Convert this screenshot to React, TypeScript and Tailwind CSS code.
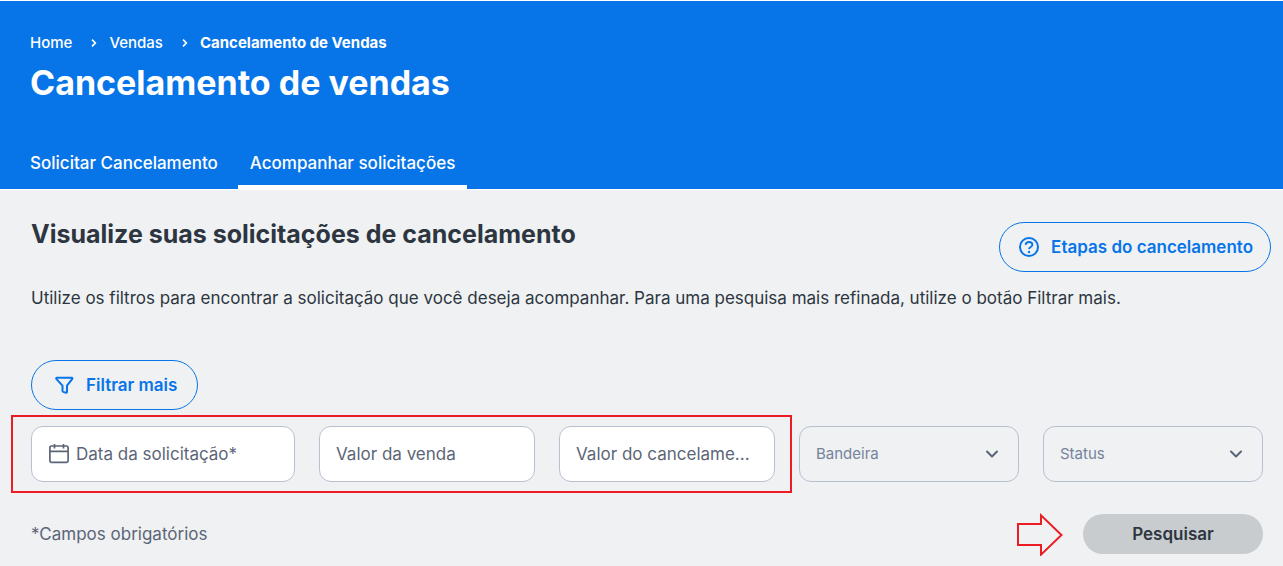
import type { ReactNode } from 'react';

const outlineButton =
  'flex h-[50px] shrink-0 items-center gap-2.5 rounded-full border border-[#0775e8] text-[17px] leading-6 font-semibold text-[#0775e8]';

const inputClass =
  'h-14 w-full min-w-0 rounded-xl border border-[#b8c0cf] bg-white px-4 text-[17px] text-[#5c6577] placeholder:text-[#5c6577] placeholder:opacity-100';

function CrumbArrow() {
  return (
    <svg
      className="mr-3 ml-[18px] h-2.5 w-[7px]"
      viewBox="0 0 7 10"
      fill="none"
      stroke="currentColor"
      strokeWidth="1.7"
      aria-hidden="true"
    >
      <path d="M2 1.7 5.3 5 2 8.3" />
    </svg>
  );
}

function SelectField({ id, label }: { id: string; label: string }) {
  return (
    <div className="relative min-w-0">
      <select
        id={id}
        aria-label={label}
        className="h-14 w-full appearance-none rounded-xl border border-[#b8c0cf] bg-transparent px-4 text-[15px] text-[#76839b]"
      >
        <option>{label}</option>
      </select>
      <svg
        className="pointer-events-none absolute top-6 right-5 h-2 w-3.5"
        viewBox="0 0 14 8"
        fill="none"
        stroke="#56637a"
        strokeWidth="2"
        strokeLinecap="round"
        strokeLinejoin="round"
        aria-hidden="true"
      >
        <path d="M2 1.5 7 6.5 12 1.5" />
      </svg>
    </div>
  );
}

function TextField({ id, label, placeholder, icon }: { id: string; label: string; placeholder: string; icon?: ReactNode }) {
  return (
    <div className="relative min-w-0">
      {icon}
      <input
        id={id}
        type="text"
        aria-label={label}
        placeholder={placeholder}
        className={icon ? `${inputClass} pl-11` : inputClass}
      />
    </div>
  );
}

export default function App() {
  return (
    <div className="min-h-screen bg-[#eff1f3] font-['Inter','Liberation_Sans',sans-serif] text-[#2d3640]">
      <header className="border-y border-white bg-[#0775e8] text-white">
        <nav aria-label="Trilha" className="flex items-center px-[30px] pt-8 text-[15px] leading-5 font-medium">
          <a href="#home">Home</a>
          <CrumbArrow />
          <a href="#vendas">Vendas</a>
          <CrumbArrow />
          <a href="#cancelamento" aria-current="page" className="font-bold">
            Cancelamento de Vendas
          </a>
        </nav>
        <h1 className="px-[30px] pt-2.5 text-[34px] leading-10 font-bold">Cancelamento de vendas</h1>
        <nav aria-label="Seções" className="mt-9 flex gap-2 px-[18px] text-[17px] leading-6 font-medium">
          <a href="#solicitar" className="h-[50px] border-b-4 border-transparent px-3 pt-3">
            Solicitar Cancelamento
          </a>
          <a href="#acompanhar" aria-current="page" className="h-[50px] border-b-4 border-white px-3 pt-3">
            Acompanhar solicitações
          </a>
        </nav>
      </header>

      <main className="pb-3 pl-[31px]">
        <div className="flex items-start justify-between pt-8 pr-3">
          <h2 className="-mt-1 text-[25px] leading-8 font-bold">Visualize suas solicitações de cancelamento</h2>
          <button type="button" className={`${outlineButton} px-[17px]`}>
            <svg className="size-6" viewBox="0 0 24 24" fill="none" stroke="currentColor" strokeWidth="2" aria-hidden="true">
              <circle cx="12" cy="12" r="9" />
              <path d="M8.6 9.9C8.8 8 10.2 7 12 7c2 0 3.4 1.1 3.4 2.8 0 2.2-3.2 2.3-3.4 4.4" strokeWidth="1.8" />
              <circle cx="12" cy="17" r="1.2" fill="currentColor" stroke="none" />
            </svg>
            Etapas do cancelamento
          </button>
        </div>

        <p className="mt-3.5 text-[17px] leading-6">
          Utilize os filtros para encontrar a solicitação que você deseja acompanhar. Para uma pesquisa mais refinada, utilize o
          botão Filtrar mais.
        </p>

        <form className="pt-[50px] pr-5">
          <button type="button" className={`${outlineButton} px-5`}>
            <svg
              className="size-6"
              viewBox="0 0 24 24"
              fill="none"
              stroke="currentColor"
              strokeWidth="2"
              strokeLinejoin="round"
              aria-hidden="true"
            >
              <path d="M4.8 4.8h15c.6 0 .8.6.5 1L15 12.6v6.3c0 .5-.4.9-.9.8l-2.9-.8a1 1 0 0 1-.7-1v-5.3L4.3 5.8c-.3-.4 0-1 .5-1Z" />
            </svg>
            Filtrar mais
          </button>

          <div className="mt-4 flex gap-6">
            <div className="relative grid min-w-0 flex-[744] grid-cols-[264fr_216fr_216fr] gap-6">
              <TextField
                id="data"
                label="Data da solicitação"
                placeholder="Data da solicitação*"
                icon={
                  <svg
                    className="pointer-events-none absolute top-4 left-4 size-6"
                    viewBox="0 0 24 24"
                    fill="none"
                    stroke="#5c6577"
                    strokeWidth="1.7"
                    aria-hidden="true"
                  >
                    <rect x="2.9" y="4" width="18.2" height="16.4" rx="1.6" />
                    <path d="M3 9.3h18M7.5 2v4.4M16.5 2v4.4" />
                  </svg>
                }
              />
              <TextField id="valor-venda" label="Valor da venda" placeholder="Valor da venda" />
              <TextField id="valor-cancelamento" label="Valor do cancelamento" placeholder="Valor do cancelame..." />
              <div className="pointer-events-none absolute -inset-y-[11px] -right-[17px] -left-5 border-2 border-[#ec1c24]" />
            </div>
            <div className="grid min-w-0 flex-[464] grid-cols-2 gap-6">
              <SelectField id="bandeira" label="Bandeira" />
              <SelectField id="status" label="Status" />
            </div>
          </div>

          <div className="mt-8 flex items-center">
            <p className="grow text-[17px] leading-6 text-[#5c6577]">*Campos obrigatórios</p>
            <svg
              className="-my-1 mr-5 h-11 w-[46px]"
              viewBox="0 0 46 44"
              fill="none"
              stroke="#ec1c24"
              strokeWidth="2"
              aria-hidden="true"
            >
              <path d="M1 12H24V3.4L44.5 23 24 42.6V33H1Z" />
            </svg>
            <button type="submit" className="h-10 w-[180px] rounded-full bg-[#c8cccf] text-[17px] leading-6 font-semibold">
              Pesquisar
            </button>
          </div>
        </form>
      </main>
    </div>
  );
}
